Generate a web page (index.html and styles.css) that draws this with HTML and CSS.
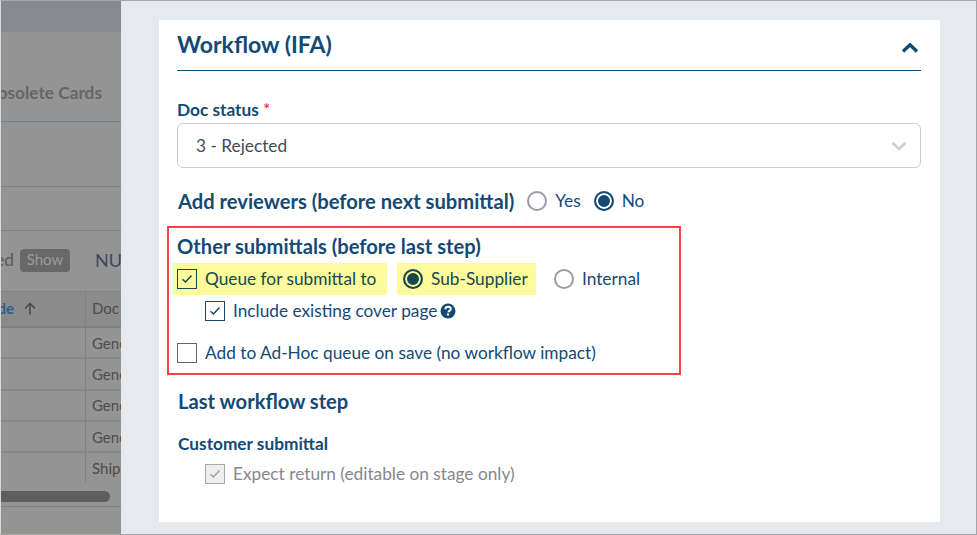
FILE: index.html
```html
<!DOCTYPE html>
<html lang="en">
<head>
<meta charset="utf-8">
<title>Workflow (IFA)</title>
<link rel="stylesheet" href="styles.css">
</head>
<body>
<div class="frame">
  <aside class="backdrop">
    <div class="bd-top"></div>
    <div class="bd-tabs"><span class="bd-tab">Obsolete Cards</span></div>
    <div class="bd-band-a"></div>
    <div class="bd-band-b"></div>
    <div class="bd-filter"><span class="bd-ed">ed</span><span class="bd-show">Show</span><span class="bd-nu">NUM</span></div>
    <div class="bd-head">
      <div class="bd-c1"><span class="bd-link">de</span>
        <svg class="bd-arrow" width="12" height="13" viewBox="0 0 12 13"><path d="M6 12.500V1.500M1 6.500 6 1.500 11 6.500" fill="none" stroke="#3c4650" stroke-width="1.400"/></svg>
      </div>
      <div class="bd-c2">Doc Category</div>
    </div>
    <div class="bd-row"><div class="bd-c1"></div><div class="bd-c2">General</div></div>
    <div class="bd-row"><div class="bd-c1"></div><div class="bd-c2">General</div></div>
    <div class="bd-row"><div class="bd-c1"></div><div class="bd-c2">General</div></div>
    <div class="bd-row"><div class="bd-c1"></div><div class="bd-c2">General</div></div>
    <div class="bd-row bd-last"><div class="bd-c1"></div><div class="bd-c2">Shipping</div></div>
    <div class="bd-scroll"><div class="bd-thumb"></div></div>
  </aside>
  <main class="panel">
    <section class="card">
      <header class="card-head">
        <h1 class="card-title">Workflow (IFA)</h1>
        <svg class="chev-up" width="18" height="12" viewBox="0 0 18 12"><path d="M2 9.500 9 2.800 16 9.500" fill="none" stroke="#134a75" stroke-width="3.400"/></svg>
      </header>
      <label class="field-label">Doc status <span class="req">*</span></label>
      <div class="select">
        <span>3 - Rejected</span>
        <svg width="16" height="10" viewBox="0 0 16 10"><path d="M1.500 1.800 8 8 14.500 1.800" fill="none" stroke="#cfcfcf" stroke-width="2.600"/></svg>
      </div>
      <div class="reviewers">
        <h2 class="sub-title">Add reviewers (before next submittal)</h2>
        <span class="radio"></span><span class="opt">Yes</span>
        <span class="radio on"></span><span class="opt">No</span>
      </div>
      <div class="callout">
        <h2 class="sub-title">Other submittals (before last step)</h2>
        <div class="queue-row">
          <div class="hl hl-a">
            <span class="check dark"><svg width="12" height="10" viewBox="0 0 12 10"><path d="M1.500 5.200 4.500 8 10.500 1.500" fill="none" stroke="#17474f" stroke-width="1.500"/></svg></span>
            <span class="opt-dark">Queue for submittal to</span>
          </div>
          <div class="hl hl-b">
            <span class="radio on dark"></span>
            <span class="opt-dark">Sub-Supplier</span>
          </div>
          <span class="radio internal"></span><span class="opt">Internal</span>
        </div>
        <div class="cover-row">
          <span class="check blue"><svg width="12" height="10" viewBox="0 0 12 10"><path d="M1.500 5.200 4.500 8 10.500 1.500" fill="none" stroke="#134a75" stroke-width="1.500"/></svg></span>
          <span class="opt">Include existing cover page</span>
          <svg class="help" width="16" height="16" viewBox="0 0 16 16"><circle cx="8" cy="8" r="7.500" fill="#134a75"/><path d="M5.300 6.200C5.400 4.600 6.600 3.700 8.100 3.700c1.600 0 2.700.9 2.700 2.200 0 1.100-.7 1.600-1.400 2-.6.400-.9.600-.9 1.300" fill="none" stroke="#fff" stroke-width="2"/><rect x="6.900" y="10.400" width="2.100" height="2.100" fill="#fff"/></svg>
        </div>
        <div class="adhoc-row">
          <span class="check"></span>
          <span class="opt">Add to Ad-Hoc queue on save (no workflow impact)</span>
        </div>
      </div>
      <h2 class="sub-title last-step">Last workflow step</h2>
      <h3 class="small-title">Customer submittal</h3>
      <div class="expect-row">
        <span class="check disabled"><svg width="12" height="10" viewBox="0 0 12 10"><path d="M1.500 5.200 4.500 8 10.500 1.500" fill="none" stroke="#a0a0a0" stroke-width="1.500"/></svg></span>
        <span class="opt muted">Expect return (editable on stage only)</span>
      </div>
    </section>
  </main>
</div>
</body>
</html>
```
FILE: styles.css
```css
* { box-sizing: border-box; }
html, body { margin: 0; padding: 0; }
body { width: 977px; height: 535px; overflow: hidden; font-family: Lato, "Liberation Sans", sans-serif; background: #fff; }
h1, h2, h3 { margin: 0; }

.frame { width: 977px; height: 535px; display: flex; border-top: 1px solid #a3a6aa; border-right: 1px solid #a3a6aa; border-bottom: 1px solid #a3a6aa; border-left: 1px solid #d8d8d8; }

/* dimmed page behind the drawer */
.backdrop { width: 120px; flex: none; overflow: hidden; background: #949494; display: flex; flex-direction: column; color: #5a5a5a; }
.bd-top { height: 31px; background: #888a92; flex: none; }
.bd-tabs { height: 90px; flex: none; border-bottom: 1px solid #6f8090; display: flex; align-items: flex-start; justify-content: flex-end; padding: 49px 19px 0 0; overflow: hidden; }
.bd-tab { font-size: 17.280px; font-weight: 700; line-height: 24px; color: #666; white-space: nowrap; }
.bd-band-a { height: 65px; flex: none; border-bottom: 1px solid #808080; }
.bd-band-b { height: 44px; flex: none; border-bottom: 1px solid #808080; }
.bd-filter { height: 60px; flex: none; display: flex; align-items: flex-start; padding: 18px 0 0; white-space: nowrap; }
.bd-ed { font-size: 17.280px; line-height: 22px; color: #5a5a5a; width: 13px; flex: none; display: flex; justify-content: flex-end; }
.bd-show { margin-left: 6px; width: 50px; height: 23px; background: #686868; border-radius: 4px; color: #9b9b9b; font-size: 15px; line-height: 21px; text-align: center; flex: none; }
.bd-nu { margin-left: 25px; font-size: 18px; line-height: 22px; color: #3a4a5e; flex: none; }
.bd-head { height: 37px; flex: none; display: flex; background: #8b8b8b; border-top: 1px solid #808080; border-bottom: 2px solid #808080; font-size: 15px; color: #4d4d4d; }
.bd-head .bd-c1, .bd-head .bd-c2 { padding-bottom: 2px; }
.bd-c1 { width: 85px; flex: none; border-right: 1px solid #808080; display: flex; align-items: center; justify-content: flex-end; padding-right: 49px; gap: 10px; }
.bd-arrow { flex: none; }
.bd-link { flex: none; color: #2d5f86; font-weight: 700; }
.bd-c2 { flex: none; width: 80px; padding-left: 6px; display: flex; align-items: center; white-space: nowrap; }
.bd-row { height: 31.300px; flex: none; display: flex; border-bottom: 2px solid #888; font-size: 15px; color: #4d4d4d; }
.bd-row.bd-last { border-bottom-color: transparent; }
.bd-scroll { flex: 1; padding-top: 7px; }
.bd-thumb { width: 109px; height: 11px; background: #5e5e5e; border-radius: 0 6px 6px 0; }
.bd-scroll::after { content: ""; display: block; height: 1px; background: #808080; margin-top: 4px; }

/* drawer */
.panel { flex: 1; background: #e6e9ee; padding: 19px 36px 12px 38px; min-width: 0; }
.card { background: #fff; height: 502px; padding: 0 19px 0 18px; color: #134a75; }
.card-head { height: 51px; border-bottom: 1px solid #134f78; display: flex; justify-content: space-between; align-items: flex-start; padding: 9px 2px 0 0; }
.card-title { font-size: 23.040px; font-weight: 700; line-height: 30px; color: #134a75; }
.chev-up { margin-top: 13px; }
.field-label { display: block; margin-top: 29px; font-size: 17.280px; line-height: 20px; font-weight: 700; color: #134a75; }
.req { color: #f01040; font-weight: 400; }
.select { height: 45px; margin-top: 3px; border: 1px solid #cccccc; border-radius: 6px; display: flex; align-items: center; justify-content: space-between; padding: 0 13px 0 18px; font-size: 17.280px; color: #444b52; }
.reviewers { display: flex; align-items: center; margin-top: 20px; height: 26px; padding-left: 1px; }
.sub-title { font-size: 20.160px; line-height: 26px; font-weight: 700; color: #134a75; }
.reviewers .sub-title { margin-right: 13px; }
.radio { width: 20px; height: 20px; border-radius: 50%; border: 2px solid #9a9aa6; flex: none; background: #fff; }
.radio.on { border-color: #134a75; background: #134a75; box-shadow: inset 0 0 0 2px #fff; }
.radio.on.dark { border-color: #17474f; background: #17474f; box-shadow: inset 0 0 0 2px #fdfb9b; }
.opt { font-size: 17.280px; line-height: 24px; color: #134a75; margin-left: 8px; }
.reviewers .opt { margin-right: 13px; }
.callout { width: 514px; height: 149px; margin-top: 12px; margin-left: -10px; border: 2px solid #f64444; padding: 5px 8px 0 8px; }
.queue-row { display: flex; align-items: center; height: 32px; margin-top: 4px; margin-left: -4px; }
.hl { background: #fdfb9b; height: 32px; display: flex; align-items: center; }
.hl-a { width: 214px; padding-left: 4px; }
.hl-b { width: 139px; margin-left: 10px; padding-left: 6px; }
.opt-dark { font-size: 17.280px; line-height: 24px; color: #17474f; margin-left: 8px; }
.internal { margin-left: 18px; }
.check { width: 20px; height: 20px; border: 1px solid #666; background: #fff; flex: none; display: flex; align-items: center; justify-content: center; }
.check.dark { border-color: #17474f; background: #fdfb9b; }
.check.blue { border-color: #134a75; }
.check.disabled { border-color: #a8a8a8; background: #eeeeee; }
.cover-row { display: flex; align-items: center; height: 24px; margin-top: 4px; margin-left: 28px; }
.help { margin-left: 3px; }
.adhoc-row { display: flex; align-items: center; height: 24px; margin-top: 18px; }
.last-step { margin-top: 13px; padding-left: 1px; }
.small-title { font-size: 17.280px; line-height: 20px; font-weight: 700; color: #134a75; margin-top: 20px; padding-left: 1px; }
.expect-row { display: flex; align-items: center; height: 24px; margin-top: 8px; margin-left: 28px; }
.muted { color: #84888c; }
```
